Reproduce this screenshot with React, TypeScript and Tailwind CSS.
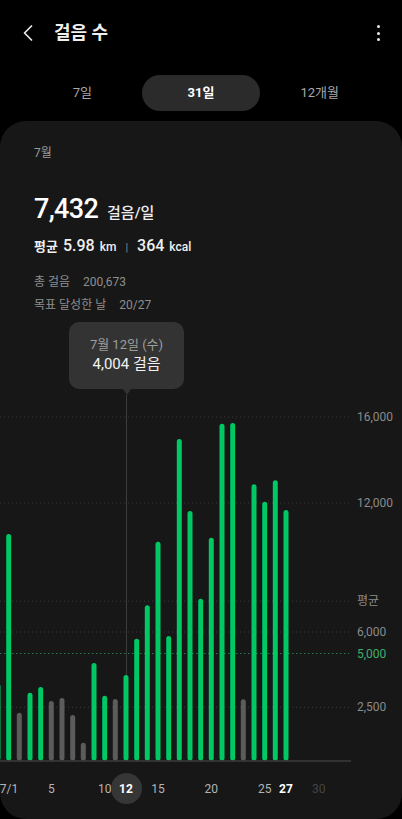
import { ChevronLeft } from "lucide-react";

// chart coordinates: y=0 is the top of the chart block, baseline at 447
const BASE = 447;
const K = 0.0215;
const yOf = (v: number) => BASE - v * K;

const bars: { x: number; top: number; gray?: boolean }[] = [
  { x: -2, top: 370 },
  { x: 8.7, top: 220 },
  { x: 19.3, top: 398.7, gray: true },
  { x: 30, top: 378.7 },
  { x: 40.7, top: 373 },
  { x: 51.3, top: 387, gray: true },
  { x: 62, top: 384, gray: true },
  { x: 72.7, top: 401, gray: true },
  { x: 83.3, top: 428.7, gray: true },
  { x: 94, top: 349 },
  { x: 104.7, top: 381.7 },
  { x: 115.3, top: 385, gray: true },
  { x: 126, top: 361 },
  { x: 136.7, top: 324.7 },
  { x: 147.3, top: 291.3 },
  { x: 158, top: 227.7 },
  { x: 168.7, top: 322 },
  { x: 179.3, top: 125 },
  { x: 190, top: 197 },
  { x: 200.7, top: 284.7 },
  { x: 211.3, top: 223.7 },
  { x: 222, top: 109.7 },
  { x: 232.7, top: 109 },
  { x: 243.3, top: 385.3, gray: true },
  { x: 254, top: 170.3 },
  { x: 264.7, top: 187.7 },
  { x: 275.3, top: 166.3 },
  { x: 286, top: 196 },
];

const grid = [
  { v: 16000, label: "16,000" },
  { v: 12000, label: "12,000" },
  { v: 7432, label: "평균" },
  { v: 6000, label: "6,000" },
  { v: 2500, label: "2,500" },
];

const xLabels = [
  { x: 9, t: "7/1" },
  { x: 51.3, t: "5" },
  { x: 104.7, t: "10" },
  { x: 158, t: "15" },
  { x: 211.3, t: "20" },
  { x: 264.7, t: "25" },
];

function StepChart() {
  return (
    <div className="relative flex-1">
      <svg className="absolute left-0 top-0" width={402} height={506}>
        {grid.map((g) => (
          <line
            key={g.v}
            x1={0}
            x2={349}
            y1={yOf(g.v)}
            y2={yOf(g.v)}
            stroke="#3a3a3a"
            strokeWidth={1}
            strokeDasharray="1 3"
          />
        ))}
        <line x1={0} x2={349} y1={yOf(5000)} y2={yOf(5000)} stroke="#2f7a4c" strokeWidth={1} strokeDasharray="1.5 2.5" />
        <line x1={126.5} x2={126.5} y1={81} y2={BASE} stroke="#3c3c3c" strokeWidth={1} />
        {bars.map((b, i) => (
          <rect
            key={i}
            x={b.x - 2.5}
            y={b.top}
            width={5}
            height={BASE - b.top - 0.5}
            rx={2.5}
            fill={b.gray ? "#5c5c5c" : "#00c964"}
          />
        ))}
        <line x1={0} x2={351} y1={BASE} y2={BASE} stroke="#3d3d3d" strokeWidth={1.5} />
      </svg>

      {/* tooltip */}
      <div className="absolute left-[69px] top-[8px] flex h-[67px] w-[115px] flex-col items-center justify-center rounded-[10px] bg-[#333333]">
        <span className="text-[13px] leading-[18px] text-[#9e9e9e]">7월 12일 (수)</span>
        <span className="text-[15px] leading-[21px] text-[#f2f2f2]">4,004 걸음</span>
        <div className="absolute -bottom-[6px] left-[54px] h-0 w-0 border-x-[4px] border-t-[6px] border-x-transparent border-t-[#333333]" />
      </div>

      {/* y axis labels */}
      {grid.map((g) => (
        <span
          key={g.v}
          className="absolute left-[357px] -translate-y-1/2 text-[12px] leading-[16px] text-[#8a8a8a]"
          style={{ top: yOf(g.v) }}
        >
          {g.label}
        </span>
      ))}
      <span
        className="absolute left-[357px] -translate-y-1/2 text-[12px] leading-[16px] text-[#3fae6b]"
        style={{ top: yOf(5000) }}
      >
        5,000
      </span>

      {/* x axis labels */}
      {xLabels.map((l) => (
        <span
          key={l.t}
          className="absolute top-[474.5px] -translate-x-1/2 -translate-y-1/2 text-[12px] leading-[16px] text-[#b4b4b4]"
          style={{ left: l.x }}
        >
          {l.t}
        </span>
      ))}
      <div className="absolute left-[110.5px] top-[459px] flex h-[31px] w-[31px] items-center justify-center rounded-full bg-[#363636]">
        <span className="text-[12px] font-bold leading-[16px] text-white">12</span>
      </div>
      <span className="absolute left-[286px] top-[474.5px] -translate-x-1/2 -translate-y-1/2 text-[12px] font-bold leading-[16px] text-white">
        27
      </span>
      <span className="absolute left-[318.7px] top-[474.5px] -translate-x-1/2 -translate-y-1/2 text-[12px] leading-[16px] text-[#444444]">
        30
      </span>
    </div>
  );
}

export default function App() {
  return (
    <div
      className="flex h-[819px] w-full flex-col overflow-hidden bg-black text-white"
      style={{ fontFamily: 'Roboto, "Noto Sans CJK KR", sans-serif' }}
    >
      {/* Header */}
      <div className="flex h-[66px] shrink-0 items-center pl-[14px] pr-[22px]">
        <ChevronLeft size={28} strokeWidth={1.5} className="text-[#e8e8e8]" />
        <h1 className="ml-[12px] text-[18px] font-bold leading-[24px] text-[#f0f0f0]">걸음 수</h1>
        <div className="ml-auto flex flex-col items-center gap-[3.5px]">
          <span className="h-[3px] w-[3px] rounded-full bg-[#e8e8e8]" />
          <span className="h-[3px] w-[3px] rounded-full bg-[#e8e8e8]" />
          <span className="h-[3px] w-[3px] rounded-full bg-[#e8e8e8]" />
        </div>
      </div>

      {/* Tabs */}
      <div className="mt-[9px] grid shrink-0 grid-cols-3 px-[23px]">
        <div className="flex h-[36px] items-center justify-center text-[13px] text-[#a8a8a8]">7일</div>
        <div className="flex h-[36px] items-center justify-center rounded-full bg-[#2b2b2b] text-[13px] font-bold text-white">
          31일
        </div>
        <div className="flex h-[36px] items-center justify-center text-[13px] text-[#a8a8a8]">12개월</div>
      </div>

      {/* Card */}
      <div className="mt-[10px] flex flex-1 flex-col rounded-[26px] bg-[#171717]">
        <div className="px-[34px] pt-[24px]">
          <div className="text-[12px] leading-[16px] text-[#9a9a9a]">7월</div>
          <div className="mt-[31px] flex items-baseline leading-[34px]">
            <span className="text-[27px] font-medium tracking-tight text-white">7,432</span>
            <span className="ml-[9px] text-[15px] font-medium text-[#eeeeee]">걸음/일</span>
          </div>
          <div className="mt-[6px] flex items-baseline leading-[20px] text-[#f0f0f0]">
            <span className="text-[13px] font-bold">평균</span>
            <span className="ml-[5px] text-[16px] font-medium">5.98</span>
            <span className="ml-[5px] text-[12px] font-medium">km</span>
            <span className="mx-[9px] text-[11px] text-[#8a8a8a]">|</span>
            <span className="text-[16px] font-medium">364</span>
            <span className="ml-[5px] text-[12px] font-medium">kcal</span>
          </div>
          <div className="mt-[15px] flex text-[12px] leading-[18px] text-[#8e8e8e]">
            <span>총 걸음</span>
            <span className="ml-[13px]">200,673</span>
          </div>
          <div className="mt-[5px] flex text-[12px] leading-[18px] text-[#8e8e8e]">
            <span>목표 달성한 날</span>
            <span className="ml-[13px]">20/27</span>
          </div>
        </div>
        <StepChart />
      </div>
    </div>
  );
}
